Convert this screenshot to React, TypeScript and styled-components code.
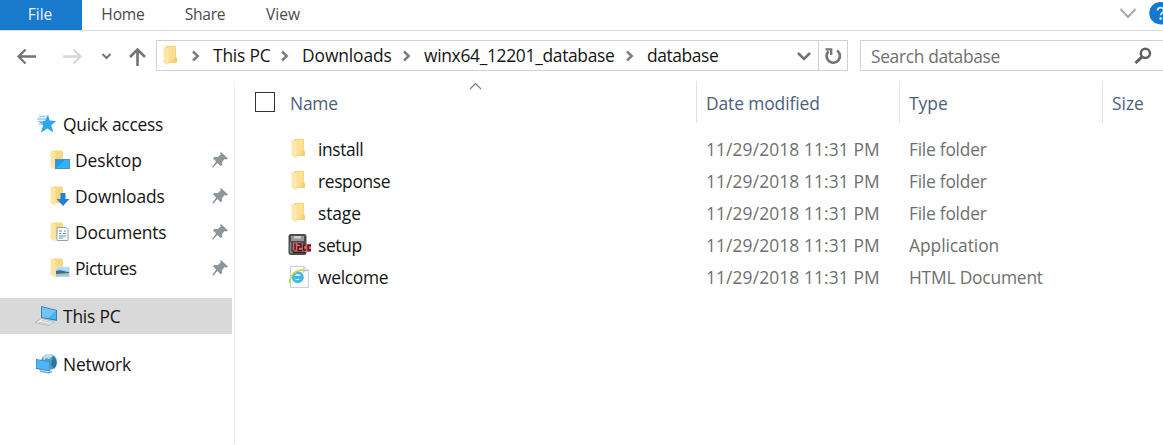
import React from "react";
import styled, { createGlobalStyle } from "styled-components";

const GlobalStyle = createGlobalStyle`
  *, *::before, *::after { box-sizing: border-box; }
  body { margin: 0; background: #fff; overflow: hidden; }
  svg { display: block; flex: none; }
`;

const Window = styled.div`
  width: 1163px;
  height: 445px;
  display: flex;
  flex-direction: column;
  overflow: hidden;
  background: #fff;
  color: #151515;
  font-family: "Open Sans", "Noto Sans", sans-serif;
  font-size: 17.4px;
  line-height: 24px;
  white-space: nowrap;
`;

const Label = styled.span<{ $track?: number }>`
  flex: none;
  letter-spacing: ${(p) => p.$track ?? 0}px;
`;

const Ribbon = styled.div`
  height: 31px;
  flex: none;
  display: flex;
  border-bottom: 1px solid #dadbdc;
  font-size: 15.6px;
  color: #4a4a4a;
`;

const Tab = styled.div<{ $width: number; $active?: boolean }>`
  width: ${(p) => p.$width}px;
  display: flex;
  justify-content: center;
  padding-top: 2px;
  padding-right: ${(p) => (p.$active ? 2 : 0)}px;
  background: ${(p) => (p.$active ? "#1979ca" : "transparent")};
  color: ${(p) => (p.$active ? "#e8f2fb" : "inherit")};
`;

const RibbonTools = styled.div`
  margin-left: auto;
  display: flex;
  gap: 12px;
  margin-right: -9px;
  padding-top: 2px;
`;

const NavBar = styled.div`
  height: 50px;
  flex: none;
  display: flex;
  padding-top: 9px;
`;

const NavButtons = styled.div`
  width: 156px;
  flex: none;
`;

const AddressBar = styled.div`
  width: 692px;
  height: 31px;
  flex: none;
  display: flex;
  border: 1px solid #d0d0d0;
`;

const Crumbs = styled.div`
  flex: 1;
  display: flex;
  align-items: center;
  padding-left: 3px;
`;

const Crumb = styled.div<{ $width: number }>`
  width: ${(p) => p.$width}px;
  flex: none;
  display: flex;
  align-items: center;

  & > span { padding-bottom: 2px; }
`;

const Dropdown = styled.div`
  width: 28px;
  display: flex;
  align-items: center;
  justify-content: center;
`;

const Refresh = styled(Dropdown)`
  width: 29px;
  border-left: 1px solid #d0d0d0;
`;

const SearchBox = styled.div`
  flex: 1;
  height: 31px;
  margin-left: 12px;
  padding: 0 10px;
  display: flex;
  justify-content: space-between;
  align-items: center;
  border: 1px solid #d0d0d0;
  border-right: 0;
  color: #707070;
`;

const Body = styled.div`
  flex: 1;
  display: flex;
`;

const Sidebar = styled.nav`
  width: 235px;
  flex: none;
  padding: 25px 2px 0 0;
  border-right: 1px solid #f2f2f2;
`;

const SideItem = styled.div<{ $nested?: boolean; $selected?: boolean; $gap?: number }>`
  height: 36px;
  margin-top: ${(p) => p.$gap ?? 0}px;
  padding: 0 4px 0 ${(p) => (p.$nested ? 48 : 35)}px;
  display: flex;
  align-items: center;
  background: ${(p) => (p.$selected ? "#d9d9d9" : "transparent")};
`;

const SideIcon = styled.div<{ $width: number }>`
  width: ${(p) => p.$width}px;
  flex: none;
`;

const PinSlot = styled.div`
  margin-left: auto;
`;

const Files = styled.main`
  flex: 1;
  min-width: 0;
`;

const columns = "461px 203px 203px 1fr";

const HeaderRow = styled.div`
  height: 42px;
  display: grid;
  grid-template-columns: ${columns};
  color: #4c607a;
`;

const HeaderCell = styled.div`
  padding: 10px 0 0 9px;
  border-left: 1px solid #e2e2e2;
`;

const NameHeader = styled.div`
  display: grid;
  grid-template-columns: 55px 179px 1fr;
  padding: 0;
  align-items: start;

  & > span { padding-top: 10px; }
`;

const Checkbox = styled.span`
  width: 20px;
  height: 20px;
  margin: 11px 0 0 20px;
  border: 1px solid #333;

  && { padding: 0; }
`;

const FileList = styled.div`
  padding-top: 10px;
`;

const FileRow = styled.div`
  height: 32px;
  display: grid;
  grid-template-columns: ${columns};
  align-items: center;
  color: #6f6f6f;
`;

const FileName = styled.div`
  display: flex;
  align-items: center;
  padding-left: 53px;
  color: #151515;
`;

const FileIcon = styled.div`
  width: 30px;
  flex: none;
`;

const Cell = styled.div`
  padding-left: 10px;
`;

const FolderIcon = ({ faded }: { faded?: boolean }) => (
  <svg width="24" height="24" viewBox="0 0 24 24" opacity={faded ? 0.95 : 1}>
    <path d="M6 2h10v11l1 1v5H6z" fill="#f6d47c" />
    <path d="M8 3h7v14H8z" fill="#fbdf90" />
    <path d="M3.500 2l5 2.500v17l-5-3z" fill="#fde7a8" />
    <path d="M13.500 14h3.500v5h-3.500z" fill="#f4cf70" />
  </svg>
);

const NavArrows = () => (
  <svg width="156" height="31" viewBox="0 40 156 31" fill="none" strokeWidth="2.3">
    <path d="M36 56.5H19M25.5 49.5l-7 7 7 7" stroke="#747474" />
    <path d="M63 56.5H80M73.500 49.500l7 7-7 7" stroke="#d8d8d8" />
    <path d="M102.500 54l4 4 4-4" stroke="#777" strokeWidth="2.2" />
    <path d="M137.500 66V49.500M130 57l7.500-7.500 7.500 7.500" stroke="#747474" strokeWidth="2.6" />
  </svg>
);

const Separator = () => (
  <svg width="31" height="16" viewBox="0 0 31 16">
    <path d="M11 3.500l4.700 4.500-4.700 4.500" fill="none" stroke="#808080" strokeWidth="2.6" />
  </svg>
);

const RefreshIcon = () => (
  <svg width="20" height="20" viewBox="0 0 20 20" fill="none" stroke="#757575" strokeWidth="2.700">
    <path d="M14 4.500A6.700 6.700 0 1 1 5.500 5.300" />
    <path d="M2.500 3.300h5.700V9" strokeWidth="2.300" />
  </svg>
);

const SearchIcon = () => (
  <svg width="20" height="20" viewBox="0 0 20 20" fill="none" stroke="#606060">
    <circle cx="12.400" cy="7.300" r="4.600" strokeWidth="2.500" />
    <path d="M9 10.800L2.500 17" strokeWidth="3" />
  </svg>
);

const HelpIcon = () => (
  <svg width="23" height="23" viewBox="0 0 23 23">
    <circle cx="11.500" cy="11.200" r="11.200" fill="#1577cf" />
    <path d="M8.500 8.600c0-4.300 6.600-3.700 6.200 0-.2 2-3 2.200-3 4.700" fill="none" stroke="#d9ebfa" strokeWidth="1.800" />
    <circle cx="11.600" cy="16.500" r="1.200" fill="#fff" />
  </svg>
);

const PinIcon = () => (
  <svg width="16" height="16" viewBox="0 0 16 16">
    <path d="M9 0l7 6.500-1.500 1-1.700-.5-2.800 3 .2 3-1.600 1.300-3.100-3.200L1 15.700l-.8-.7 3.900-5.500L1 6.500 2.400 5l3.400.1 3-2.600L8 1z" fill="#8d969b" />
  </svg>
);

const StarIcon = () => (
  <svg width="22" height="20" viewBox="0 0 22 20">
    <path d="M13 .5l1.700 6 6.500.5-5 4.200 2.200 7.300-6-4-6.500 4 2.200-7L3.500 7H10z" fill="#2da5f3" />
    <path d="M4 2.500h7M2 5h9M3 7.500h5M4 10h4" stroke="#8bcff9" strokeWidth="1.300" />
  </svg>
);

const SideFolder = ({ children }: { children: React.ReactNode }) => (
  <svg width="24" height="24" viewBox="0 0 24 24">
    <path d="M5 2.500h9l1 2V19H5z" fill="#f7d77f" />
    <path d="M2.500 2.500l5 2V22l-5-3z" fill="#fde6a4" />
    {children}
  </svg>
);

const ComputerIcon = () => (
  <svg width="24" height="24" viewBox="0 0 24 24">
    <path d="M6 2l16 4v11L6 14z" fill="#3c7fb5" />
    <path d="M7 3.300l14 3.500v8.800L7 13z" fill="#48b2f7" />
    <path d="M7 3.300l14 3.500-8 7.200-6-1z" fill="#6fc4fa" />
    <path d="M6.500 14.500l12.500 3-5 4-14-3z" fill="#eceeef" stroke="#a5adb3" strokeWidth=".8" />
    <path d="M4 18l10 2.200M7 16.500l9 2" stroke="#b3bcc2" strokeWidth=".7" />
  </svg>
);

const NetworkIcon = () => (
  <svg width="24" height="24" viewBox="0 0 24 24">
    <circle cx="14" cy="10" r="8" fill="#4f9fc5" />
    <path d="M8 5c3-4 8-4 10-1l-4 3-3-1-2 3z" fill="#b7dfe8" />
    <path d="M18 4c4 4 5 9 1 13l-3-5z" fill="#2b7598" />
    <path d="M1 7l14 2.500v10L1 17z" fill="#347fb4" />
    <path d="M1.500 7.800l13 2.300v8.500L1.500 16.300z" fill="#4bb5f7" />
    <path d="M5 19l9 2 3-1.700" fill="none" stroke="#6fa9c9" strokeWidth="1.500" />
  </svg>
);

const SetupIcon = () => (
  <svg width="25" height="24" viewBox="0 0 25 24">
    <rect x="0.500" y="1" width="18" height="21" rx="2.500" fill="#4b4b4b" />
    <path d="M3 3h13v5H3z" fill="#969696" />
    <path d="M6 3h7v2.500H6z" fill="#cfcfcf" />
    <path d="M2.500 9v10.500H16" fill="none" stroke="#858585" strokeWidth="1.400" />
    <path d="M5 9.500h9.500V11H23v8H8l-3-2.500z" fill="#dd666b" />
    <path d="M7 10.500v6.500M9.500 11h3.500v3h-3v3.500h4M17.800 12h-2.300v5h2.500M23 12.500h-3v4.500h3" fill="none" stroke="#35191b" strokeWidth="1.400" />
    <path d="M5 19.500h12" stroke="#282828" strokeWidth="1.500" />
  </svg>
);

const WelcomeIcon = () => (
  <svg width="24" height="24" viewBox="0 0 24 24">
    <path d="M2.500 1.500h13.500l4.500 4v17h-18z" fill="#fbfbfb" stroke="#cfcfcf" />
    <path d="M16 1.500v4h4.500" fill="#eee" stroke="#bbb" />
    <path d="M14 13.500c-1.500 4.500-8.900 4-8.900-1.500 0-6 9.200-6 9.200.5H6.500" fill="none" stroke="#42b8ed" strokeWidth="2.800" />
    <path d="M3 17.500C-.5 18.500 3 9.500 8.500 6.500s8.500-2 7 1" fill="none" stroke="#b7d653" strokeWidth="1.500" />
  </svg>
);

const overlays = {
  desktop: (
    <>
      <rect x="7.500" y="11.500" width="14" height="9" fill="#1b9bea" stroke="#4a91bd" />
      <path d="M8 20l9-8h4v8z" fill="#38aef8" />
    </>
  ),
  downloads: <path d="M12.500 9h5v6h4L15 22l-6.500-7h4z" fill="#2380d2" />,
  documents: (
    <>
      <path d="M9 7.500h9l2 2v11H9z" fill="#f7fafc" stroke="#8fa3af" />
      <path d="M11 11h3m2 0h2M11 13.500h2m2 0h3M11 16h7M11 18h4" stroke="#6596b8" strokeWidth="1.200" />
    </>
  ),
  pictures: (
    <>
      <path d="M8 11h13.500v9.500H8z" fill="#abdaf3" stroke="#dae4e9" />
      <path d="M8 15c5-2 8 1 13 1v3H8z" fill="#406986" />
      <path d="M8 18l13-1v3.500H8z" fill="#a8c6c6" />
    </>
  ),
};

const pinned = [
  { name: "Desktop", icon: overlays.desktop, track: -0.05 },
  { name: "Downloads", icon: overlays.downloads, track: -0.1 },
  { name: "Documents", icon: overlays.documents, track: -0.2 },
  { name: "Pictures", icon: overlays.pictures, track: -0.45 },
];

const crumbs = [
  { name: "This PC", width: 89, track: -0.2 },
  { name: "Downloads", width: 122, track: -0.1 },
  { name: "winx64_12201_database", width: 223, track: -0.31 },
  { name: "database", width: 110, track: -0.4 },
];

const files = [
  { name: "install", type: "File folder", icon: <FolderIcon faded />, track: -0.4, typeTrack: -0.25 },
  { name: "response", type: "File folder", icon: <FolderIcon faded />, track: -0.35, typeTrack: -0.25 },
  { name: "stage", type: "File folder", icon: <FolderIcon faded />, track: -0.1, typeTrack: -0.25 },
  { name: "setup", type: "Application", icon: <SetupIcon />, track: -0.35, typeTrack: -0.05 },
  { name: "welcome", type: "HTML Document", icon: <WelcomeIcon />, track: -0.3, typeTrack: -0.2 },
];

export default function App() {
  return (
    <Window>
      <GlobalStyle />
      <Ribbon>
        <Tab $width={82} $active><Label>File</Label></Tab>
        <Tab $width={82}><Label $track={-0.2}>Home</Label></Tab>
        <Tab $width={82}><Label $track={-0.3}>Share</Label></Tab>
        <Tab $width={74}><Label>View</Label></Tab>
        <RibbonTools>
          <svg width="18" height="22" viewBox="0 0 18 22">
            <path d="M1.500 7l7.500 8 7.500-8" fill="none" stroke="#aaa" strokeWidth="2" />
          </svg>
          <HelpIcon />
        </RibbonTools>
      </Ribbon>
      <NavBar>
        <NavButtons><NavArrows /></NavButtons>
        <AddressBar>
          <Crumbs>
            <Crumb $width={22}><FolderIcon /></Crumb>
            {crumbs.map((c) => (
              <Crumb key={c.name} $width={c.width}>
                <Separator />
                <Label $track={c.track}>{c.name}</Label>
              </Crumb>
            ))}
          </Crumbs>
          <Dropdown>
            <svg width="16" height="16" viewBox="0 0 16 16">
              <path d="M2 5l6 6 6-6" fill="none" stroke="#747474" strokeWidth="2.600" />
            </svg>
          </Dropdown>
          <Refresh><RefreshIcon /></Refresh>
        </AddressBar>
        <SearchBox>
          <Label $track={-0.35}>Search database</Label>
          <SearchIcon />
        </SearchBox>
      </NavBar>
      <Body>
        <Sidebar>
          <SideItem>
            <SideIcon $width={28}><StarIcon /></SideIcon>
            <Label $track={-0.27}>Quick access</Label>
          </SideItem>
          {pinned.map((p) => (
            <SideItem key={p.name} $nested>
              <SideIcon $width={27}><SideFolder>{p.icon}</SideFolder></SideIcon>
              <Label $track={p.track}>{p.name}</Label>
              <PinSlot><PinIcon /></PinSlot>
            </SideItem>
          ))}
          <SideItem $selected $gap={12}>
            <SideIcon $width={28}><ComputerIcon /></SideIcon>
            <Label $track={-0.2}>This PC</Label>
          </SideItem>
          <SideItem $gap={12}>
            <SideIcon $width={28}><NetworkIcon /></SideIcon>
            <Label $track={-0.2}>Network</Label>
          </SideItem>
        </Sidebar>
        <Files>
          <HeaderRow>
            <NameHeader>
              <Checkbox />
              <Label $track={-0.2}>Name</Label>
              <svg width="13" height="12" viewBox="0 0 13 12">
                <path d="M1 8l5.500-5.500L12 8" fill="none" stroke="#777" strokeWidth="1.100" />
              </svg>
            </NameHeader>
            <HeaderCell><Label $track={-0.1}>Date modified</Label></HeaderCell>
            <HeaderCell><Label>Type</Label></HeaderCell>
            <HeaderCell><Label>Size</Label></HeaderCell>
          </HeaderRow>
          <FileList>
            {files.map((f) => (
              <FileRow key={f.name}>
                <FileName>
                  <FileIcon>{f.icon}</FileIcon>
                  <Label $track={f.track}>{f.name}</Label>
                </FileName>
                <Cell><Label $track={0.1}>11/29/2018 11:31 PM</Label></Cell>
                <Cell><Label $track={f.typeTrack}>{f.type}</Label></Cell>
              </FileRow>
            ))}
          </FileList>
        </Files>
      </Body>
    </Window>
  );
}
